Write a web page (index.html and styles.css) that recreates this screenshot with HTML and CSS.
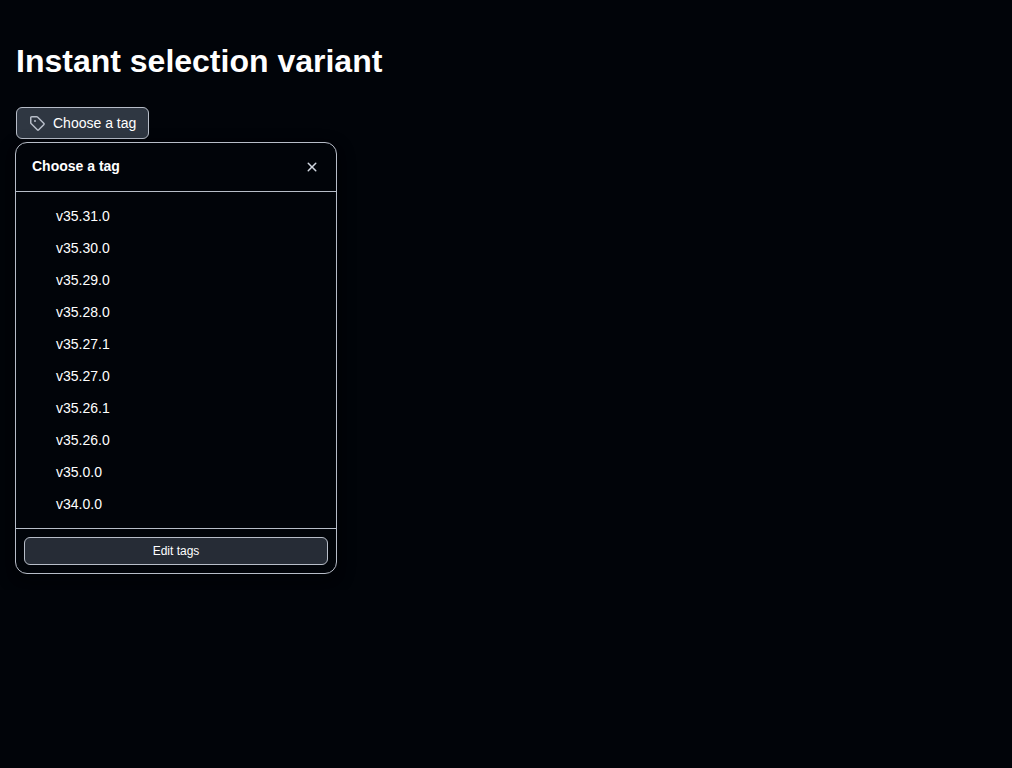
FILE: index.html
```html
<!DOCTYPE html>
<html lang="en">
<head>
<meta charset="utf-8">
<meta name="viewport" content="width=device-width, initial-scale=1">
<title>Instant selection variant</title>
<link rel="stylesheet" href="styles.css">
</head>
<body>
<main class="page">
  <h1 class="title">Instant selection variant</h1>
  <button class="trigger" type="button" aria-haspopup="true" aria-expanded="true">
    <svg class="icon" viewBox="0 0 16 16" aria-hidden="true"><path d="M1 7.775V2.75C1 1.784 1.784 1 2.75 1h5.025c.464 0 .91.184 1.238.513l6.25 6.25a1.75 1.75 0 0 1 0 2.474l-5.026 5.026a1.75 1.75 0 0 1-2.474 0l-6.25-6.25A1.752 1.752 0 0 1 1 7.775Zm1.5 0c0 .066.026.13.073.177l6.25 6.25a.25.25 0 0 0 .354 0l5.025-5.025a.25.25 0 0 0 0-.354l-6.25-6.25a.25.25 0 0 0-.177-.073H2.75a.25.25 0 0 0-.25.25ZM6 5a1 1 0 1 1 0 2 1 1 0 0 1 0-2Z"/></svg>
    <span>Choose a tag</span>
  </button>
  <section class="panel" role="dialog" aria-labelledby="panel-title">
    <header class="panel-header">
      <h2 class="panel-title" id="panel-title">Choose a tag</h2>
      <button class="close" type="button" aria-label="Close">
        <svg class="icon" viewBox="0 0 16 16" aria-hidden="true"><path d="M3.72 3.72a.75.75 0 0 1 1.06 0L8 6.94l3.22-3.22a.75.75 0 1 1 1.06 1.06L9.06 8l3.22 3.22a.75.75 0 1 1-1.06 1.06L8 9.06l-3.22 3.22a.75.75 0 0 1-1.06-1.06L6.94 8 3.72 4.78a.75.75 0 0 1 0-1.06Z"/></svg>
      </button>
    </header>
    <ul class="list">
      <li><button class="item" type="button">v35.31.0</button></li>
      <li><button class="item" type="button">v35.30.0</button></li>
      <li><button class="item" type="button">v35.29.0</button></li>
      <li><button class="item" type="button">v35.28.0</button></li>
      <li><button class="item" type="button">v35.27.1</button></li>
      <li><button class="item" type="button">v35.27.0</button></li>
      <li><button class="item" type="button">v35.26.1</button></li>
      <li><button class="item" type="button">v35.26.0</button></li>
      <li><button class="item" type="button">v35.0.0</button></li>
      <li><button class="item" type="button">v34.0.0</button></li>
    </ul>
    <footer class="panel-footer">
      <button class="edit" type="button">Edit tags</button>
    </footer>
  </section>
</main>
</body>
</html>
```

FILE: styles.css
```css
* {
  box-sizing: border-box;
}

body {
  margin: 0;
  background: #010409;
  color: #fff;
  font-family: "Liberation Sans", Arial, sans-serif;
  font-size: 14px;
  line-height: 20px;
}

button {
  font: inherit;
  color: inherit;
  cursor: pointer;
}

.page {
  display: flex;
  flex-direction: column;
  align-items: flex-start;
  padding: 37px 16px 16px;
}

.title {
  margin: 0 0 22px;
  font-size: 32px;
  line-height: 48px;
}

.icon {
  display: block;
  width: 16px;
  height: 16px;
  fill: #b7bdc8;
}

.trigger {
  display: flex;
  align-items: center;
  gap: 8px;
  height: 32px;
  padding: 0 12px;
  border: 1px solid #b7bdc8;
  border-radius: 6px;
  background: #2f3742;
}

.panel {
  width: 322px;
  max-width: 100%;
  margin: 3px 0 0 -1px;
  border: 1px solid #b7bdc8;
  border-radius: 12px;
  background: #010409;
  box-shadow: 0 6px 12px -3px rgba(1, 4, 9, 0.4), 0 6px 18px rgba(0, 0, 0, 0.4);
}

.panel-header {
  display: flex;
  align-items: flex-start;
  justify-content: space-between;
  padding: 8px 8px 8px 16px;
  border-bottom: 1px solid #b7bdc8;
}

.panel-title {
  margin: 0;
  padding: 5px 0;
  font-size: 14px;
  line-height: 20px;
}

.close {
  display: grid;
  place-items: center;
  width: 32px;
  height: 32px;
  padding: 0;
  border: 0;
  border-radius: 6px;
  background: transparent;
}

.close .icon {
  fill: #d1d7e0;
}

.list {
  margin: 0;
  padding: 8px;
  list-style: none;
}

.item {
  display: block;
  width: 100%;
  height: 32px;
  padding: 6px 8px 6px 32px;
  border: 0;
  border-radius: 6px;
  background: transparent;
  text-align: left;
}

.panel-footer {
  padding: 8px;
  border-top: 1px solid #b7bdc8;
}

.edit {
  display: block;
  width: 100%;
  height: 28px;
  padding: 0 8px;
  border: 1px solid #b7bdc8;
  border-radius: 6px;
  background: #262c36;
  font-size: 12px;
}
```
